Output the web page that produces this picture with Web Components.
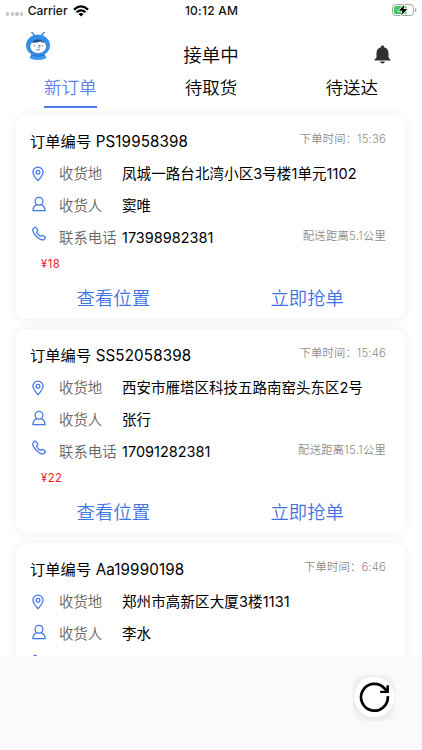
<!DOCTYPE html>
<html lang="zh-CN">
<head>
<meta charset="utf-8">
<meta name="viewport" content="width=device-width">
<title>接单中</title>
<style>
html,body{margin:0;height:100%;background:#fff}
body{font-family:Inter,"Noto Sans CJK SC",sans-serif;overflow:hidden;color:#111}
</style>
</head>
<body>
<rider-app></rider-app>
<script>
const define = (name, html, setup) => customElements.define(name, class extends HTMLElement {
  constructor() {
    super();
    this.attachShadow({mode: 'open'}).innerHTML = html;
  }
  connectedCallback() { if (setup) setup(this, this.shadowRoot); }
});

define('status-bar', `
<style>
:host{display:grid;grid-template-columns:1fr auto 1fr;align-items:center;height:21px;padding:0 5px 0 6px;font-size:12px;font-weight:500;line-height:20px;box-sizing:border-box;color:#111}
.left{display:flex;align-items:center}
.dots{display:flex;gap:1.2px;margin:7px 4.5px 0 0}
.dots i{width:3.4px;height:3.4px;border-radius:50%;background:#c4c4c4}
.wifi{margin-left:5px}
.battery{justify-self:end;margin-top:-2px}
svg{display:block}
</style>
<div class="left"><span class="dots"><i></i><i></i><i></i><i></i></span><span>Carrier</span>
<svg class="wifi" width="16" height="12" viewBox="0 0 16 12"><g fill="none" stroke="#000" stroke-width="2.2"><path d="M1 4.6Q8-1.7 15 4.6"/><path d="M3.5 7.3Q8 3.3 12.5 7.3"/></g><path d="M5.4 9Q8 6.8 10.6 9L8 11.6Z"/></svg></div>
<span style="letter-spacing:.23px">10:12 AM</span>
<svg class="battery" width="25" height="12" viewBox="0 0 25 12"><rect x=".5" y=".5" width="21" height="11" rx="3" fill="#fff" stroke="#a5a5a5"/><rect x="2" y="2" width="12.5" height="8" rx="1.5" fill="#42cb62"/><path d="M23 4v4q1.500-.5 1.500-2T23 4" fill="#a5a5a5"/><path d="M12.300.8 6.800 6.800h3.500L9.200 11.200 15.400 5h-3.800Z" stroke="#fff" stroke-width="1.400" paint-order="stroke"/></svg>`);

define('page-header', `
<style>
:host{display:grid;grid-template-columns:1fr auto 1fr;height:52px;padding:0 31px 0 25px;box-sizing:border-box}
h1{margin:20px 0 0 6px;font-size:18.5px;line-height:28px;font-weight:350;color:#000}
.mascot{margin-top:10px}
.bell{justify-self:end;margin-top:24px}
</style>
<svg class="mascot" width="26" height="31" viewBox="0 0 26 31">
<path d="M9 5Q9 2 6.700 1.600M17 5Q17 2 19.500 1.500" fill="none" stroke="#3a78c4" stroke-width="1.200" stroke-linecap="round"/>
<path d="M7 22.500Q4.500 25 4.800 27.200Q13 31 21.300 27.200Q21 24.500 18.500 22.500Z" fill="#3c97f0"/>
<ellipse cx="13" cy="14.300" rx="12" ry="10.800" fill="#338fe9"/>
<path d="M6.500 24Q13 26.600 19.500 24" fill="none" stroke="#2a70b8" stroke-width="1"/>
<ellipse cx="13.200" cy="15.600" rx="8.400" ry="6.900" fill="#fff" stroke="#2d74be" stroke-width=".8"/>
<path d="M7 11.800Q9 8.400 13 8.500T19.500 11.800Q17 11.800 15.500 10.600Q12 12 7 11.800" fill="#20558e"/>
<path d="M9.600 14.200v1.200M17.600 14v1.200M13.300 14.600Q15.500 13.600 15.200 15.200L13.400 17M11.500 18.800Q14.200 19.800 15 17.800" fill="none" stroke="#315f92" stroke-width=".9"/>
</svg>
<h1>接单中</h1>
<svg class="bell" width="17" height="19" viewBox="0 0 17 19" fill="#303030"><path d="M8.500.5c1 0 1.600.7 1.600 1.700 2.800.8 4.400 2.800 4.400 5.800v4.600l2 2.100v.9H.5v-.9l2-2.100V8c0-3 1.600-5 4.400-5.800C6.900 1.200 7.500.5 8.500.5ZM6.200 16.500h4.600a2.300 2 0 0 1-4.600 0Z"/></svg>`);

define('order-tabs', `
<style>
:host{display:grid;grid-template-columns:repeat(3,1fr);height:35px;font-size:17.5px;line-height:30px;font-weight:350;text-align:center;color:#000}
span{box-sizing:border-box;justify-self:center;height:35px}
.on{color:#5881e8;border-bottom:2px solid #4d7ce9}
</style>
<span class="on">新订单</span><span>待取货</span><span>待送达</span>`);

const icons = {
  pin: '<svg width="14" height="16" viewBox="0 0 14 16"><path d="M7 14.700C4.500 11.700 1.900 8.900 1.900 6.200a5.100 5.100 0 0 1 10.200 0C12.100 8.900 9.500 11.700 7 14.700Z"/><circle cx="7" cy="6.200" r="1.900"/></svg>',
  person: '<svg width="14" height="16" viewBox="0 0 14 16"><circle cx="7" cy="5.200" r="3.900"/><path d="M5 8.700C2.300 9.700 1 11.700.9 14.700H13.100C13 11.700 11.700 9.700 9 8.700"/></svg>',
  phone: '<svg width="14" height="16" viewBox="0 0 14 16"><path d="M1.300 2.600 2.500 1.400Q3.300.8 4 1.600L5.500 3.700Q6 4.500 5.300 5.200 4.400 6 4.800 6.700 6 8.900 8.100 10.100 8.800 10.400 9.500 9.700 10.200 9 11 9.500L13 11Q13.700 11.700 13 12.500L12.200 13.400Q10.300 14.900 6.900 12.500 3.500 10.200 1.500 6.600.1 3.800 1.300 2.600Z"/></svg>'
};
define('info-row', `
<style>
:host{display:flex;align-items:center;height:32px;font-size:14.5px;line-height:24px;color:#000;white-space:nowrap}
.icon{box-sizing:border-box;width:29px;height:16px;padding-left:var(--indent,.5px);margin-top:var(--lift,-1px)}
svg{display:block;fill:none;stroke:#3f75ec;stroke-width:1.25}
.label{width:63px;color:#666;font-weight:350;font-size:14.4px}
.extra{margin-left:auto;font-size:11.3px;letter-spacing:.26px;color:#8c8c8c;font-weight:350;margin-top:-4px}
</style>
<span class="icon"></span><span class="label"></span><span class="value"><slot></slot></span><span class="extra"><slot name="extra"></slot></span>`,
(el, root) => {
  root.querySelector('.icon').innerHTML = icons[el.getAttribute('icon')];
  root.querySelector('.label').textContent = el.getAttribute('label') || '';
});

define('order-card', `
<style>
:host{display:block;box-sizing:border-box;height:204px;margin:0 17px 10px 16px;padding:11px 19px 0 14px;border-radius:11px;background:#fff;box-shadow:0 0 11px rgba(0,0,0,.075)}
header{display:flex;justify-content:space-between;height:32px;line-height:31px;font-size:15.2px;letter-spacing:.12px;color:#000;white-space:nowrap}
.time{font-size:11.3px;line-height:27px;letter-spacing:.18px;color:#8c8c8c;font-weight:350}
.price{height:21px;line-height:21px;padding-left:11px;font-size:11.3px;letter-spacing:.5px;color:#ed1c24}
.actions{display:flex;justify-content:space-between;padding:9px 42px 0 46.5px;font-size:18.4px;line-height:28px;font-weight:350;color:#3f73e3}
</style>
<header><span>订单编号 <slot name="number"></slot></span><span class="time">下单时间：<slot name="time"></slot></span></header>
<info-row icon="pin" label="收货地"><slot name="address"></slot></info-row>
<info-row icon="person" label="收货人" style="--lift:-5px;--indent:1.5px"><slot name="name"></slot></info-row>
<info-row class="call" icon="phone" label="联系电话" style="--lift:-8px;--indent:1.5px"><slot name="phone"></slot><span slot="extra">配送距离<slot name="distance"></slot>公里</span></info-row>
<div class="price">¥<slot name="price"></slot></div>
<div class="actions"><span>查看位置</span><span>立即抢单</span></div>`,
(el, root) => {
  if (!el.hasAttribute('peek')) return;
  const call = root.querySelector('.call');
  call.removeAttribute('label');
  call.replaceChildren();
  call.connectedCallback();
  root.querySelector('.price').remove();
  root.querySelector('.actions').remove();
});

define('refresh-button', `
<style>
:host{position:absolute;left:353px;top:675px;width:42px;height:46px;overflow:hidden;background:radial-gradient(circle at 21px 23px,#e8e8e8 19px,#f4f4f4 25px,#fafafa 30px)}
svg{display:block}
</style>
<svg width="42" height="46" viewBox="0 0 42 46"><circle cx="21.300" cy="22" r="20.300" fill="#fff"/><path d="M34.800 21.200A13.400 13.400 0 1 1 31.400 13.300L34 16" fill="none" stroke="#000" stroke-width="2.700"/><path d="M34.700 10.200V16.900H27.200" fill="none" stroke="#000" stroke-width="2.400"/></svg>`);

define('rider-app', `
<style>
:host{display:block;position:relative;width:422px;height:750px;background:#fff;overflow:hidden}
main{height:548px;overflow:hidden;box-sizing:border-box;padding-top:7px}
footer{height:94px;background:#fafafa}
</style>
<status-bar></status-bar><page-header></page-header><order-tabs></order-tabs>
<main>
<order-card><span slot="number">PS19958398</span><span slot="time">15:36</span><span slot="address" style="letter-spacing:.08px">凤城一路台北湾小区3号楼1单元1102</span><span slot="name">窦唯</span><span slot="phone">17398982381</span><span slot="distance">5.1</span><span slot="price">18</span></order-card>
<order-card><span slot="number">SS52058398</span><span slot="time">15:46</span><span slot="address">西安市雁塔区科技五路南窑头东区2号</span><span slot="name">张行</span><span slot="phone">17091282381</span><span slot="distance">15.1</span><span slot="price">22</span></order-card>
<order-card peek><span slot="number">Aa19990198</span><span slot="time">6:46</span><span slot="address" style="letter-spacing:.12px">郑州市高新区大厦3楼1131</span><span slot="name">李水</span></order-card>
</main>
<footer></footer>
<refresh-button></refresh-button>`);
</script>
</body>
</html>
